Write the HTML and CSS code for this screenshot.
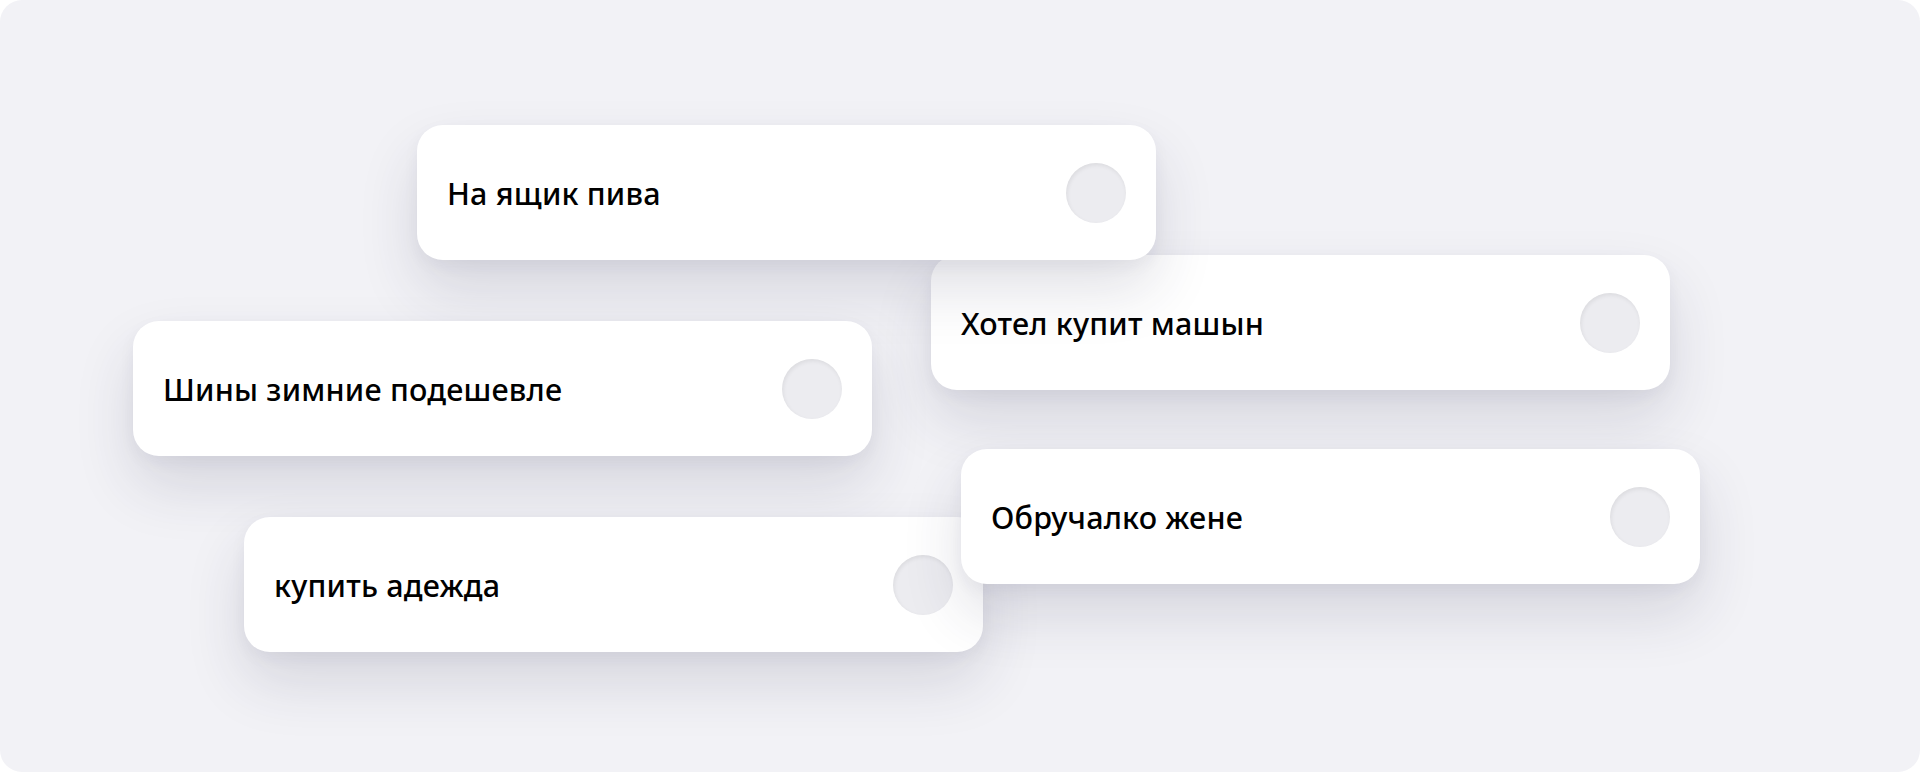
FILE: index.html
```html
<!DOCTYPE html>
<html lang="ru">

<head>
    <meta charset="utf-8">
    <meta name="viewport" content="width=device-width, initial-scale=1.0">
    <title>Список желаний</title>
    <link rel="stylesheet" href="styles.css">
</head>

<body>
    <div class="stage">
        <div class="task task-2">
            <span class="label">Хотел купит машын</span>
            <span class="check"></span>
        </div>
        <div class="task task-1">
            <span class="label">На ящик пива</span>
            <span class="check"></span>
        </div>
        <div class="task task-3">
            <span class="label">Шины зимние подешевле</span>
            <span class="check"></span>
        </div>
        <div class="task task-5">
            <span class="label">купить адежда</span>
            <span class="check"></span>
        </div>
        <div class="task task-4">
            <span class="label">Обручалко жене</span>
            <span class="check"></span>
        </div>
    </div>
</body>

</html>
```

FILE: styles.css
```css
html,
body,
* {
    margin: 0;
    padding: 0;
    box-sizing: border-box;
}

body {
    background-color: white;
    font-family: "Noto Sans", "Open Sans", sans-serif;
}

.stage {
    position: relative;
    width: 1920px;
    height: 772px;
    background-color: #f2f2f6;
    border-radius: 22px;
    overflow: hidden;
}

/* floating cards */
.task {
    position: absolute;
    width: 739px;
    height: 135px;
    display: flex;
    align-items: center;
    justify-content: space-between;
    padding: 0 30px;
    background-color: white;
    border-radius: 26px;
    box-shadow: 0 30px 60px rgba(40, 40, 80, 0.14), 0 6px 16px rgba(40, 40, 80, 0.05);
}

.label {
    font-size: 30.5px;
    font-weight: 500;
    color: black;
    letter-spacing: 0.2px;
}

.check {
    width: 60px;
    height: 60px;
    border-radius: 50%;
    background-color: #ececf0;
    box-shadow: inset 1px 2px 4px rgba(0, 0, 0, 0.07);
}

.task-1 {
    left: 417px;
    top: 125px;
}

.task-2 {
    left: 931px;
    top: 255px;
}

.task-3 {
    left: 133px;
    top: 321px;
}

.task-4 {
    left: 961px;
    top: 449px;
}

.task-5 {
    left: 244px;
    top: 517px;
}
```
